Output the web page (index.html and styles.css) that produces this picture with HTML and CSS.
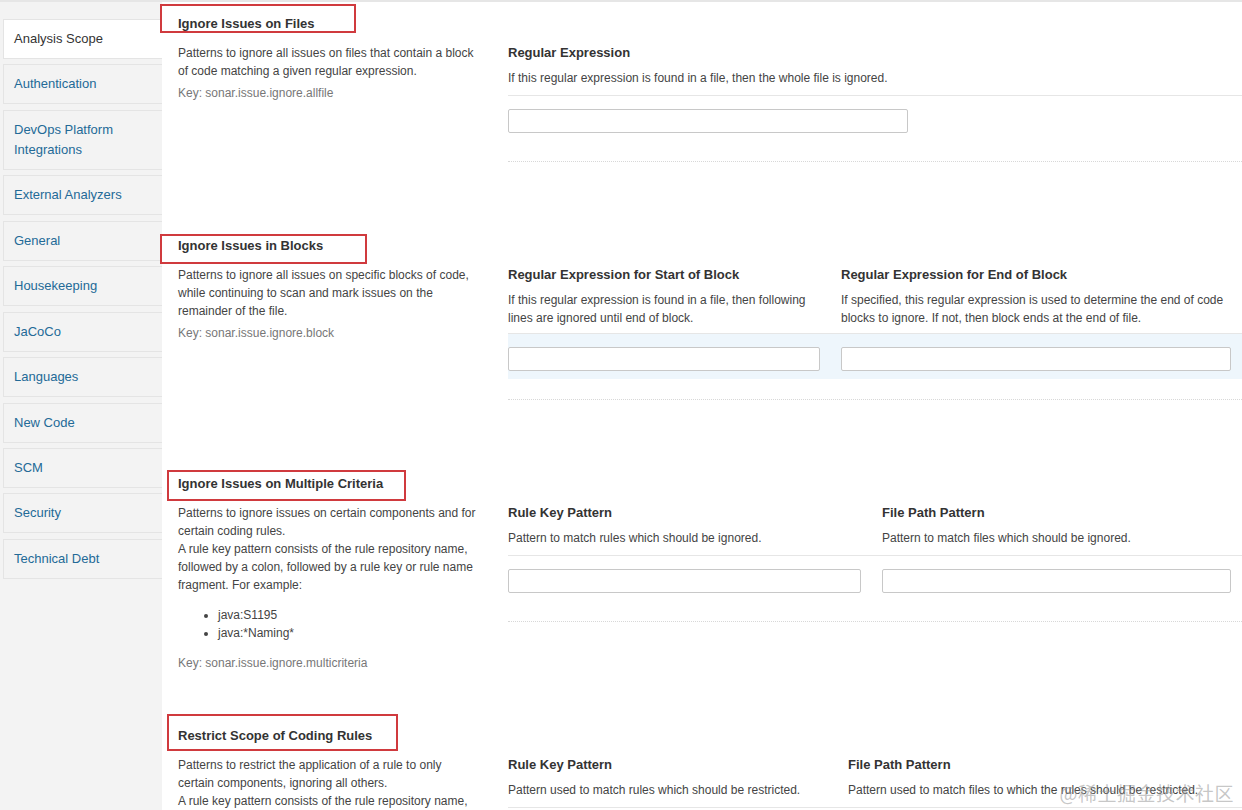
FILE: index.html
```html
<!DOCTYPE html>
<html>
<head>
<meta charset="utf-8">
<link rel="stylesheet" href="styles.css">
</head>
<body>
<div class="topline"></div>
<div class="page">
  <nav class="sidebar">
    <div class="nav-item active">Analysis Scope</div>
    <div class="nav-item">Authentication</div>
    <div class="nav-item">DevOps Platform Integrations</div>
    <div class="nav-item">External Analyzers</div>
    <div class="nav-item">General</div>
    <div class="nav-item">Housekeeping</div>
    <div class="nav-item">JaCoCo</div>
    <div class="nav-item">Languages</div>
    <div class="nav-item">New Code</div>
    <div class="nav-item">SCM</div>
    <div class="nav-item">Security</div>
    <div class="nav-item">Technical Debt</div>
  </nav>
  <main class="main">
    <section class="def">
      <h3 class="def-title">Ignore Issues on Files<span class="annot a1"></span></h3>
      <div class="def-body">
        <div class="def-left">
          <div class="def-desc">Patterns to ignore all issues on files that contain a block of code matching a given regular expression.</div>
          <div class="def-key">Key: sonar.issue.ignore.allfile</div>
        </div>
        <div class="def-right">
          <div class="fields one">
            <div class="f-head">
              <div class="f-title">Regular Expression</div>
              <div class="f-desc">If this regular expression is found in a file, then the whole file is ignored.</div>
            </div>
            <div class="f-val"><div class="input w400"></div></div>
          </div>
          <div class="f-end"></div>
        </div>
      </div>
    </section>

    <section class="def">
      <h3 class="def-title">Ignore Issues in Blocks<span class="annot a2"></span></h3>
      <div class="def-body">
        <div class="def-left">
          <div class="def-desc">Patterns to ignore all issues on specific blocks of code, while continuing to scan and mark issues on the remainder of the file.</div>
          <div class="def-key">Key: sonar.issue.ignore.block</div>
        </div>
        <div class="def-right">
          <div class="fields two c312">
            <div class="f-head first tight">
              <div class="f-title">Regular Expression for Start of Block</div>
              <div class="f-desc">If this regular expression is found in a file, then following lines are ignored until end of block.</div>
            </div>
            <div class="f-head last tight">
              <div class="f-title">Regular Expression for End of Block</div>
              <div class="f-desc">If specified, this regular expression is used to determine the end of code blocks to ignore. If not, then block ends at the end of file.</div>
            </div>
            <div class="f-val first hl"><div class="input"></div></div>
            <div class="f-val last hl"><div class="input"></div></div>
          </div>
          <div class="f-end"></div>
        </div>
      </div>
    </section>

    <section class="def">
      <h3 class="def-title">Ignore Issues on Multiple Criteria<span class="annot a3"></span></h3>
      <div class="def-body">
        <div class="def-left">
          <div class="def-desc">Patterns to ignore issues on certain components and for certain coding rules.<br>A rule key pattern consists of the rule repository name, followed by a colon, followed by a rule key or rule name fragment. For example:
            <ul>
              <li>java:S1195</li>
              <li>java:*Naming*</li>
            </ul>
          </div>
          <div class="def-key">Key: sonar.issue.ignore.multicriteria</div>
        </div>
        <div class="def-right">
          <div class="fields two c353">
            <div class="f-head first">
              <div class="f-title">Rule Key Pattern</div>
              <div class="f-desc">Pattern to match rules which should be ignored.</div>
            </div>
            <div class="f-head last">
              <div class="f-title">File Path Pattern</div>
              <div class="f-desc">Pattern to match files which should be ignored.</div>
            </div>
            <div class="f-val first"><div class="input"></div></div>
            <div class="f-val last"><div class="input"></div></div>
          </div>
          <div class="f-end"></div>
        </div>
      </div>
    </section>

    <section class="def">
      <h3 class="def-title">Restrict Scope of Coding Rules<span class="annot a4"></span></h3>
      <div class="def-body">
        <div class="def-left">
          <div class="def-desc">Patterns to restrict the application of a rule to only certain components, ignoring all others.<br>A rule key pattern consists of the rule repository name, followed by a colon, followed by a rule key or rule name fragment. For example:</div>
        </div>
        <div class="def-right">
          <div class="fields two c340">
            <div class="f-head first">
              <div class="f-title">Rule Key Pattern</div>
              <div class="f-desc">Pattern used to match rules which should be restricted.</div>
            </div>
            <div class="f-head last">
              <div class="f-title">File Path Pattern</div>
              <div class="f-desc">Pattern used to match files to which the rules should be restricted.</div>
            </div>
            <div class="f-val first"><div class="input"></div></div>
            <div class="f-val last"><div class="input"></div></div>
          </div>
        </div>
      </div>
    </section>
  </main>
</div>
<div class="watermark">@稀土掘金技术社区</div>
</body>
</html>
```
FILE: styles.css
```css
html, body {
  margin: 0;
  padding: 0;
  height: 100%;
  overflow: hidden;
}
body {
  font-family: "Liberation Sans", Arial, sans-serif;
  font-size: 12px;
  color: #444;
  background: #fff;
  position: relative;
}
.topline {
  height: 2px;
  background: #e6e6e6;
}
.page {
  display: flex;
  min-height: 808px;
}
.sidebar {
  width: 159px;
  flex: none;
  background: #f3f3f3;
  padding: 17px 0 0 3px;
}
.nav-item {
  border: 1px solid #e4e4e4;
  border-right: none;
  background: #f3f3f3;
  padding: 9px 10px;
  line-height: 20px;
  font-size: 13px;
  color: #236a97;
  margin-bottom: 5.45px;
}
.nav-item.active {
  background: #fff;
  color: #333;
}
.main {
  flex: 1;
  padding: 12px 0 0 16px;
  min-width: 0;
}
.def {
  margin-bottom: 54px;
}
.def-title {
  position: relative;
  margin: 0 0 10px 0;
  font-size: 13px;
  line-height: 20px;
  font-weight: bold;
  color: #333;
}
.annot {
  position: absolute;
  border: 2px solid #d03a3e;
  box-sizing: border-box;
}
.a1 { left: -18px; top: -10px; width: 196px; height: 29px; }
.a2 { left: -18px; top: -2px; width: 207px; height: 30px; }
.a3 { left: -11px; top: -4px; width: 239px; height: 31px; }
.a4 { left: -11px; top: -12px; width: 231px; height: 37px; }
.def-body {
  display: flex;
}
.def-left {
  width: 302px;
  flex: none;
  margin-right: 28px;
}
.def-desc {
  line-height: 18px;
  color: #444;
}
.def-desc ul {
  margin: 12px 0;
  padding-left: 40px;
}
.def-key {
  margin-top: 4px;
  line-height: 18px;
  color: #777;
}
.def-right {
  flex: 1;
  min-width: 0;
}
.fields {
  display: grid;
}
.fields.one { grid-template-columns: 1fr; }
.fields.c312 { grid-template-columns: 333px 1fr; }
.fields.c353 { grid-template-columns: 374px 1fr; }
.fields.c340 { grid-template-columns: 340px 1fr; }
.f-head {
  padding-bottom: 8px;
  border-bottom: 1px solid #e6e6e6;
}
.f-head.tight { padding-bottom: 6px; }
.f-head.first, .f-val.first { padding-right: 21px; }
.f-head.last, .f-val.last { padding-right: 11px; }
.f-title {
  font-size: 13px;
  font-weight: bold;
  line-height: 18px;
  color: #333;
  margin-bottom: 7px;
}
.f-desc {
  line-height: 18px;
  color: #444;
}
.f-val {
  padding: 13px 0 8px 0;
}
.f-val.hl { background: #eef6fc; }
.input {
  height: 22px;
  border: 1px solid #c8c8c8;
  border-radius: 2px;
  background: #fff;
}
.input.w400 { width: 398px; }
.f-end {
  height: 20px;
  border-bottom: 1px dotted #d8d8d8;
  margin-bottom: 20px;
}
.watermark {
  position: absolute;
  right: 8px;
  bottom: 4px;
  font-family: "Noto Sans CJK SC", "Liberation Serif", serif;
  font-size: 19px;
  color: rgba(150, 150, 150, 0.55);
  letter-spacing: 0.5px;
}
```
